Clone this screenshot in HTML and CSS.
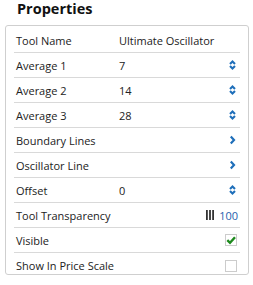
FILE: index.html
```html
<!DOCTYPE html>
<html>
<head>
<meta charset="utf-8">
<link rel="stylesheet" href="styles.css">
</head>
<body>
<h1 class="title">Properties</h1>
<div class="panel">
  <div class="row"><span class="label">Tool Name</span><span class="value">Ultimate Oscillator</span></div>
  <div class="row"><span class="label">Average 1</span><span class="value">7</span><svg class="spin" viewBox="0 0 7 10"><path d="M1 4 L3.5 1.5 L6 4 M1 6 L3.5 8.5 L6 6" fill="none" stroke="#1f6fba" stroke-width="2.1"/></svg></div>
  <div class="row"><span class="label">Average 2</span><span class="value">14</span><svg class="spin" viewBox="0 0 7 10"><path d="M1 4 L3.5 1.5 L6 4 M1 6 L3.5 8.5 L6 6" fill="none" stroke="#1f6fba" stroke-width="2.1"/></svg></div>
  <div class="row"><span class="label">Average 3</span><span class="value">28</span><svg class="spin" viewBox="0 0 7 10"><path d="M1 4 L3.5 1.5 L6 4 M1 6 L3.5 8.5 L6 6" fill="none" stroke="#1f6fba" stroke-width="2.1"/></svg></div>
  <div class="row"><span class="label">Boundary Lines</span><span class="value"></span><svg class="chev" viewBox="0 0 7 10"><path d="M1.8 1.5 L5 5 L1.8 8.5" fill="none" stroke="#1f6fba" stroke-width="2.2"/></svg></div>
  <div class="row"><span class="label">Oscillator Line</span><span class="value"></span><svg class="chev" viewBox="0 0 7 10"><path d="M1.8 1.5 L5 5 L1.8 8.5" fill="none" stroke="#1f6fba" stroke-width="2.2"/></svg></div>
  <div class="row"><span class="label">Offset</span><span class="value">0</span><svg class="spin" viewBox="0 0 7 10"><path d="M1 4 L3.5 1.5 L6 4 M1 6 L3.5 8.5 L6 6" fill="none" stroke="#1f6fba" stroke-width="2.1"/></svg></div>
  <div class="row"><span class="label">Tool Transparency</span><span class="value"></span><span class="trans"><svg class="bars" viewBox="0 0 8 10"><rect x="0" y="0" width="1.8" height="10" fill="#333"/><rect x="3.1" y="0" width="1.8" height="10" fill="#333"/><rect x="6.2" y="0" width="1.8" height="10" fill="#333"/></svg><span class="num">100</span></span></div>
  <div class="row"><span class="label">Visible</span><span class="value"></span><span class="box"><svg viewBox="0 0 12 12"><path d="M2.3 6.2 L5 8.8 L10 3.3" fill="none" stroke="#1e8a1e" stroke-width="2.4"/></svg></span></div>
  <div class="row"><span class="label">Show In Price Scale</span><span class="value"></span><span class="box"></span></div>
</div>
</body>
</html>
```
FILE: styles.css
```css
html, body {
  margin: 0;
  padding: 0;
  background: #ffffff;
}
body {
  font-family: "Open Sans", "Liberation Sans", sans-serif;
  color: #222222;
}
.title {
  margin: 0;
  padding: 0 0 0 17px;
  height: 25px;
  font-size: 14.5px;
  font-weight: 700;
  line-height: 17px;
  color: #111111;
}
.panel {
  margin: 0 4px 0 5px;
  border: 1px solid #cfcfcf;
  border-radius: 3px;
  padding: 2px 8px 1px 8px;
  height: 250px;
  box-sizing: border-box;
}
.row {
  display: flex;
  align-items: center;
  height: 25px;
  box-sizing: border-box;
  border-bottom: 1px solid #d9d9d9;
  font-size: 11px;
  padding: 0 2px 0 2px;
}
.row:last-child {
  border-bottom: none;
}
.label {
  width: 103px;
  flex: none;
}
.value {
  flex: 1;
}
.spin {
  width: 7px;
  height: 10px;
  margin-right: 2px;
}
.chev {
  width: 7px;
  height: 10px;
  margin-right: 2px;
}
.trans {
  display: flex;
  align-items: center;
  gap: 5px;
}
.bars {
  width: 8px;
  height: 10px;
}
.num {
  color: #1f5fae;
}
.box {
  width: 12px;
  height: 12px;
  border: 1px solid #cccccc;
  box-sizing: border-box;
  display: flex;
  align-items: center;
  justify-content: center;
  margin-right: 1px;
}
.box svg {
  width: 12px;
  height: 12px;
  flex: none;
}
```
